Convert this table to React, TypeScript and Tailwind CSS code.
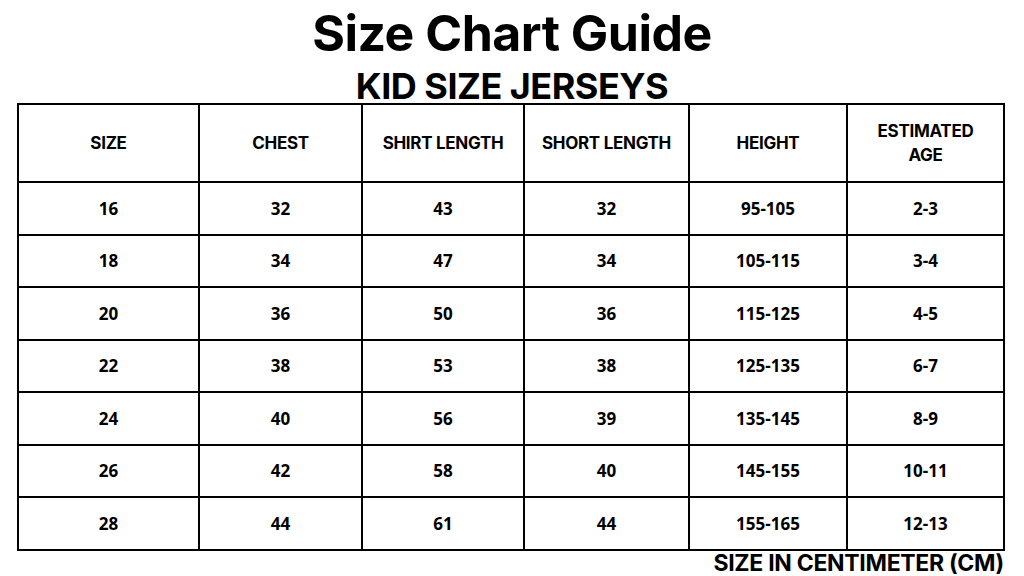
import React from "react";

const headers = ["SIZE", "CHEST", "SHIRT LENGTH", "SHORT LENGTH", "HEIGHT", "ESTIMATED AGE"];
const rows = [
  ["16", "32", "43", "32", "95-105", "2-3"],
  ["18", "34", "47", "34", "105-115", "3-4"],
  ["20", "36", "50", "36", "115-125", "4-5"],
  ["22", "38", "53", "38", "125-135", "6-7"],
  ["24", "40", "56", "39", "135-145", "8-9"],
  ["26", "42", "58", "40", "145-155", "10-11"],
  ["28", "44", "61", "44", "155-165", "12-13"],
];

export default function App() {
  return (
    <div className="w-[1024px] h-[576px] bg-white text-black overflow-hidden flex flex-col font-['Inter',sans-serif]">
      <div className="h-[103px] flex flex-col items-center">
        <div className="text-[50px] leading-none font-bold tracking-[-0.5px] mt-[8px]">
          Size Chart Guide
        </div>
        <div className="text-[36px] leading-none font-bold tracking-[-0.5px] mt-[10px]">
          KID SIZE JERSEYS
        </div>
      </div>
      <div className="ml-[17px] w-[988px] h-[448px] border-l-2 border-t-2 border-black grid grid-cols-[181px_163px_162px_165px_158px_157px] grid-rows-[78px_repeat(7,minmax(0,1fr))]">
        {headers.map((h, i) => (
          <div
            key={h}
            className="border-r-2 border-b-2 border-black flex items-center justify-center text-center text-[17px] leading-[24px] font-bold tracking-[-0.3px] px-4"
          >
            {i === 5 ? (
              <span>
                ESTIMATED
                <br />
                AGE
              </span>
            ) : (
              h
            )}
          </div>
        ))}
        {rows.map((r, ri) =>
          r.map((c, ci) => (
            <div
              key={ri + "-" + ci}
              className="border-r-2 border-b-2 border-black flex items-center justify-center text-[17px] font-bold font-['Open_Sans',sans-serif]"
            >
              {c}
            </div>
          ))
        )}
      </div>
      <div className="flex justify-end pr-[20px]">
        <div className="text-[23px] leading-[22px] font-bold tracking-[-0.3px] mt-[1px]">
          SIZE IN CENTIMETER (CM)
        </div>
      </div>
    </div>
  );
}
